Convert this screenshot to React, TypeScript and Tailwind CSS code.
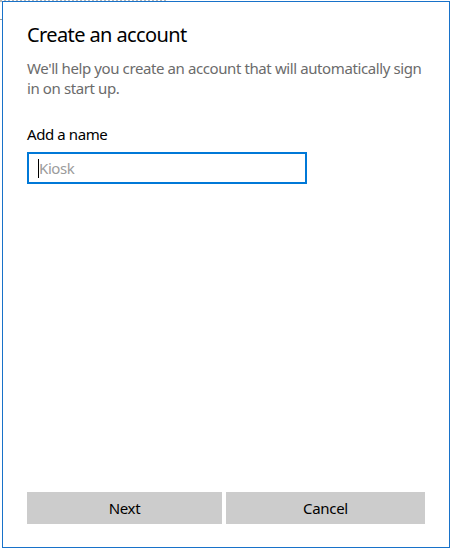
export default function App() {
  return (
    <div className="relative h-[549px] w-[452px] overflow-hidden bg-white font-['Noto_Sans',sans-serif]">
      {/* page behind the dialog, only its very edge shows */}
      <div className="absolute left-0 top-0 h-[2px] w-[166px] border-b-2 border-dotted border-[#b5b5b5]" />
      <div className="absolute left-0 top-[19px] h-px w-[3px] bg-[#999]" />

      <div className="absolute left-[2px] top-[1px] flex h-[547px] w-[448px] flex-col border border-[#1872c9] bg-white px-[24px] pb-[23px] pt-[19px]">
        <h1 className="text-[20px] leading-[28px] tracking-[-0.6px] text-black">Create an account</h1>
        <p className="mt-[9px] text-[15px] leading-[20px] tracking-[-0.4px] text-[#6b6b6b]">
          We'll help you create an account that will automatically sign in on start up.
        </p>

        <label className="mt-[26px] text-[15px] leading-[20px] tracking-[-0.4px] text-black">Add a name</label>
        <div className="mt-[8px] flex h-[32px] w-[280px] items-center border-2 border-[#0078d7] px-[9px]">
          <span className="h-[19px] w-px bg-black" />
          <span className="text-[15px] leading-[20px] tracking-[-0.4px] text-[#9b9b9b]">Kiosk</span>
        </div>

        <div className="mt-auto flex gap-[4px]">
          <button className="h-[32px] w-[195px] bg-[#cccccc] text-[15px] tracking-[-0.3px] text-black">Next</button>
          <button className="h-[32px] w-[199px] bg-[#cccccc] text-[15px] tracking-[-0.3px] text-black">Cancel</button>
        </div>
      </div>
    </div>
  );
}
